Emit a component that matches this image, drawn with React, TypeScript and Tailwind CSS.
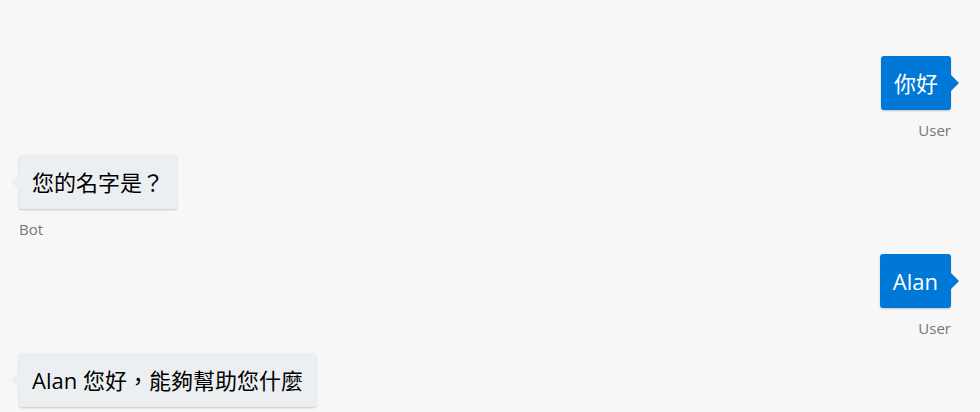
import React from "react";

type Msg = { from: "user" | "bot"; text: string };

const messages: Msg[] = [
  { from: "user", text: "你好" },
  { from: "bot", text: "您的名字是？" },
  { from: "user", text: "Alan" },
  { from: "bot", text: "Alan 您好，能夠幫助您什麼" },
];

const font = { fontFamily: '"Open Sans", "Noto Sans CJK TC", sans-serif' };

const Bubble = ({ msg }: { msg: Msg }) => {
  const isUser = msg.from === "user";
  return (
    <div className={`flex flex-col ${isUser ? "items-end" : "items-start"}`}>
      <div
        className={`relative h-[54px] rounded-[3px] px-[13px] text-[22px] leading-[54px] whitespace-nowrap shadow-[0_1px_2px_rgba(0,0,0,0.2)] ${
          isUser ? "bg-[#0078d7] text-white" : "bg-[#eceff1] text-black"
        }`}
      >
        {msg.text}
        {isUser ? (
          <span className="absolute right-[-8px] top-[19px] h-0 w-0 border-y-[8px] border-l-[8px] border-y-transparent border-l-[#0078d7]" />
        ) : (
          <span className="absolute left-[-8px] top-[19px] h-0 w-0 border-y-[8px] border-r-[8px] border-y-transparent border-r-[#eceff1]" />
        )}
      </div>
      <div className="mt-[10px] h-5 text-[15px] leading-5 text-[#767676]">
        {isUser ? "User" : "Bot"}
      </div>
    </div>
  );
};

export default function App() {
  return (
    <div className="h-[412px] w-[980px] overflow-hidden bg-[#f7f7f7]" style={font}>
      <div className="flex flex-col gap-[15px] pl-[19px] pr-[29px] pt-[56px]">
        {messages.map((m, i) => (
          <Bubble key={i} msg={m} />
        ))}
      </div>
    </div>
  );
}
